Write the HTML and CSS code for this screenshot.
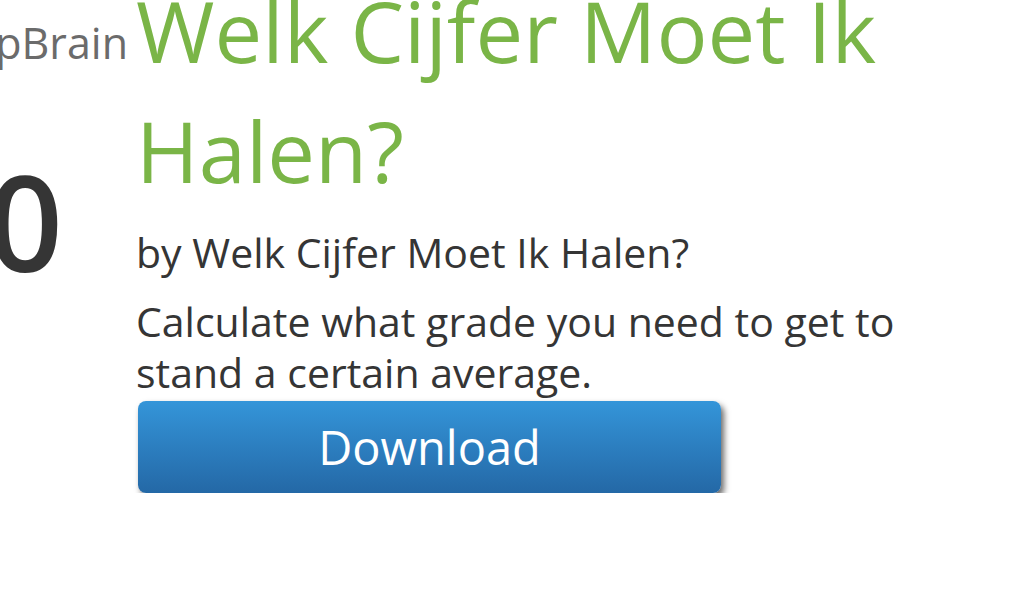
FILE: index.html
```html
<!DOCTYPE html>
<html>
<head>
<meta charset="utf-8">
<link rel="stylesheet" href="styles.css">
</head>
<body>
<div class="page">
  <div class="side">
    <div class="logo">AppBrain</div>
    <div class="count">10</div>
  </div>
  <div class="main">
    <h1 class="title">Welk Cijfer Moet Ik Halen?</h1>
    <p class="by">by Welk Cijfer Moet Ik Halen?</p>
    <p class="desc">Calculate what grade you need to get to stand a certain average.</p>
    <a class="download">Download</a>
  </div>
</div>
</body>
</html>
```

FILE: styles.css
```css
html, body {
  margin: 0;
  padding: 0;
  background: #ffffff;
}
body {
  font-family: "Open Sans", "Noto Sans", sans-serif;
  overflow: hidden;
}
.page {
  display: flex;
  align-items: flex-start;
  margin-top: -30px;
}
.side {
  width: 129px;
  flex: none;
  overflow: hidden;
  display: flex;
  flex-direction: column;
  align-items: flex-end;
}
.logo {
  font-size: 43px;
  line-height: 120px;
  margin-top: 13px;
  color: #6b6b6b;
  white-space: nowrap;
  margin-right: 1px;
}
.count {
  font-size: 132px;
  font-weight: 600;
  line-height: 1;
  color: #353535;
  white-space: nowrap;
  margin-right: 66px;
  margin-top: 52px;
}
.main {
  width: 800px;
  padding-left: 7px;
}
.title {
  margin: 0;
  font-size: 85px;
  line-height: 120px;
  font-weight: 400;
  color: #7ab547;
}
.by {
  margin: 17px 0 0;
  font-size: 41px;
  line-height: 51px;
  color: #353535;
}
.desc {
  margin: 18px 0 0;
  font-size: 41px;
  line-height: 51px;
  color: #353535;
}
.download {
  display: block;
  width: 583px;
  height: 92px;
  margin-top: 3px;
  margin-left: 2px;
  border-radius: 8px;
  background: linear-gradient(#3495d9, #2468a6);
  box-shadow: 3px 4px 6px rgba(0, 0, 0, 0.6);
  color: #ffffff;
  font-size: 47px;
  line-height: 92px;
  text-align: center;
}
```
